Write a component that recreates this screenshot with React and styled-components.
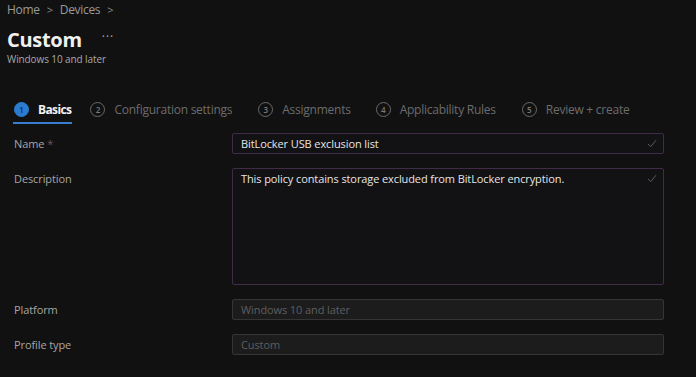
import React from "react";
import styled, { createGlobalStyle } from "styled-components";

const Global = createGlobalStyle`
  html, body { margin: 0; padding: 0; background: #111112; }
  body { font-family: "Open Sans", "Noto Sans", sans-serif; color: #d6d6d6; }
  * { box-sizing: border-box; }
`;

const Page = styled.div`
  width: 696px;
  height: 377px;
  overflow: hidden;
  background: #111112;
  padding: 2px 0 0 7px;
`;

const Crumbs = styled.div`
  display: flex;
  align-items: center;
  gap: 7px;
  font-size: 12px;
  line-height: 16px;
  color: #9a9a9a;
  letter-spacing: -0.3px;
`;

const Sep = styled.span`
  color: #8a8a8a;
  font-size: 11px;
`;

const TitleRow = styled.div`
  display: flex;
  align-items: center;
  margin-top: 8px;
  height: 26px;
`;

const Title = styled.h1`
  margin: 0;
  font-size: 20px;
  font-weight: 700;
  color: #f0f0f0;
  letter-spacing: -0.3px;
`;

const More = styled.span`
  margin-left: 20px;
  color: #aaa;
  font-size: 12px;
  letter-spacing: 1px;
  margin-top: -6px;
`;

const Subtitle = styled.div`
  font-size: 10px;
  color: #a8a8a8;
  line-height: 14px;
  letter-spacing: -0.1px;
`;

const Tabs = styled.div`
  display: flex;
  margin-top: 30px;
  margin-left: 6px;
  height: 28px;
`;

const Tab = styled.div`
  display: flex;
  align-items: center;
  gap: 9px;
  height: 28px;
  padding: 0 1px;
  margin-right: ${(p) => p.$mr}px;
  border-bottom: 2px solid ${(p) => (p.$active ? "#3a7fcf" : "transparent")};
  font-size: 12px;
  letter-spacing: ${(p) => (p.$active ? "-0.6px" : "-0.25px")};
  font-weight: ${(p) => (p.$active ? 700 : 400)};
  color: ${(p) => (p.$active ? "#f2f2f2" : "#6c6c6c")};
`;

const Step = styled.span`
  width: 15px;
  height: 15px;
  border-radius: 50%;
  display: inline-flex;
  align-items: center;
  justify-content: center;
  font-size: 8px;
  font-weight: 600;
  letter-spacing: 0;
  background: ${(p) => (p.$active ? "#2b7bd0" : "transparent")};
  border: 1px solid ${(p) => (p.$active ? "#2b7bd0" : "#6a6a6a")};
  color: ${(p) => (p.$active ? "#0a2a4a" : "#7a7a7a")};
`;

const Form = styled.div`
  display: grid;
  grid-template-columns: 218px 432px;
  row-gap: 14px;
  margin-top: 9px;
  margin-left: 7px;
`;

const Label = styled.div`
  font-size: 11px;
  color: #a6a6a6;
  letter-spacing: -0.1px;
  height: 21px;
  display: flex;
  align-items: center;
`;

const Req = styled.span`
  color: #6a5560;
  margin-left: 3px;
`;

const Field = styled.div`
  position: relative;
  height: ${(p) => p.$h}px;
  border: 1px solid ${(p) => (p.$disabled ? "#353535" : "#412c48")};
  background: ${(p) => (p.$disabled ? "#1c1c1d" : "#121113")};
  border-radius: 2px;
  padding: 3px 28px 0 8px;
  font-size: 11px;
  line-height: 14px;
  letter-spacing: -0.1px;
  color: ${(p) => (p.$disabled ? "#5e5e5e" : "#e6e6e6")};
`;

const Check = styled.svg`
  position: absolute;
  right: 6px;
  top: 5px;
`;

const CheckIcon = () => (
  <Check width="10" height="9" viewBox="0 0 10 9">
    <path d="M1 5 L3.8 7.6 L9 1.2" fill="none" stroke="#5a5a5a" strokeWidth="1" />
  </Check>
);

const steps = [
  { n: 1, t: "Basics", mr: 17 },
  { n: 2, t: "Configuration settings", mr: 24 },
  { n: 3, t: "Assignments", mr: 23 },
  { n: 4, t: "Applicability Rules", mr: 24 },
  { n: 5, t: "Review + create", mr: 0 },
];

export default function App() {
  return (
    <Page>
      <Global />
      <Crumbs>
        <span>Home</span>
        <Sep>&gt;</Sep>
        <span>Devices</span>
        <Sep>&gt;</Sep>
      </Crumbs>
      <TitleRow>
        <Title>Custom</Title>
        <More>···</More>
      </TitleRow>
      <Subtitle>Windows 10 and later</Subtitle>
      <Tabs>
        {steps.map((s, i) => (
          <Tab key={s.n} $active={i === 0} $mr={s.mr}>
            <Step $active={i === 0}>{s.n}</Step>
            {s.t}
          </Tab>
        ))}
      </Tabs>
      <Form>
        <Label>
          Name<Req>*</Req>
        </Label>
        <Field $h={21}>
          BitLocker USB exclusion list
          <CheckIcon />
        </Field>
        <Label>Description</Label>
        <Field $h={117}>
          This policy contains storage excluded from BitLocker encryption.
          <CheckIcon />
        </Field>
        <Label>Platform</Label>
        <Field $h={21} $disabled>
          Windows 10 and later
        </Field>
        <Label>Profile type</Label>
        <Field $h={21} $disabled>
          Custom
        </Field>
      </Form>
    </Page>
  );
}
